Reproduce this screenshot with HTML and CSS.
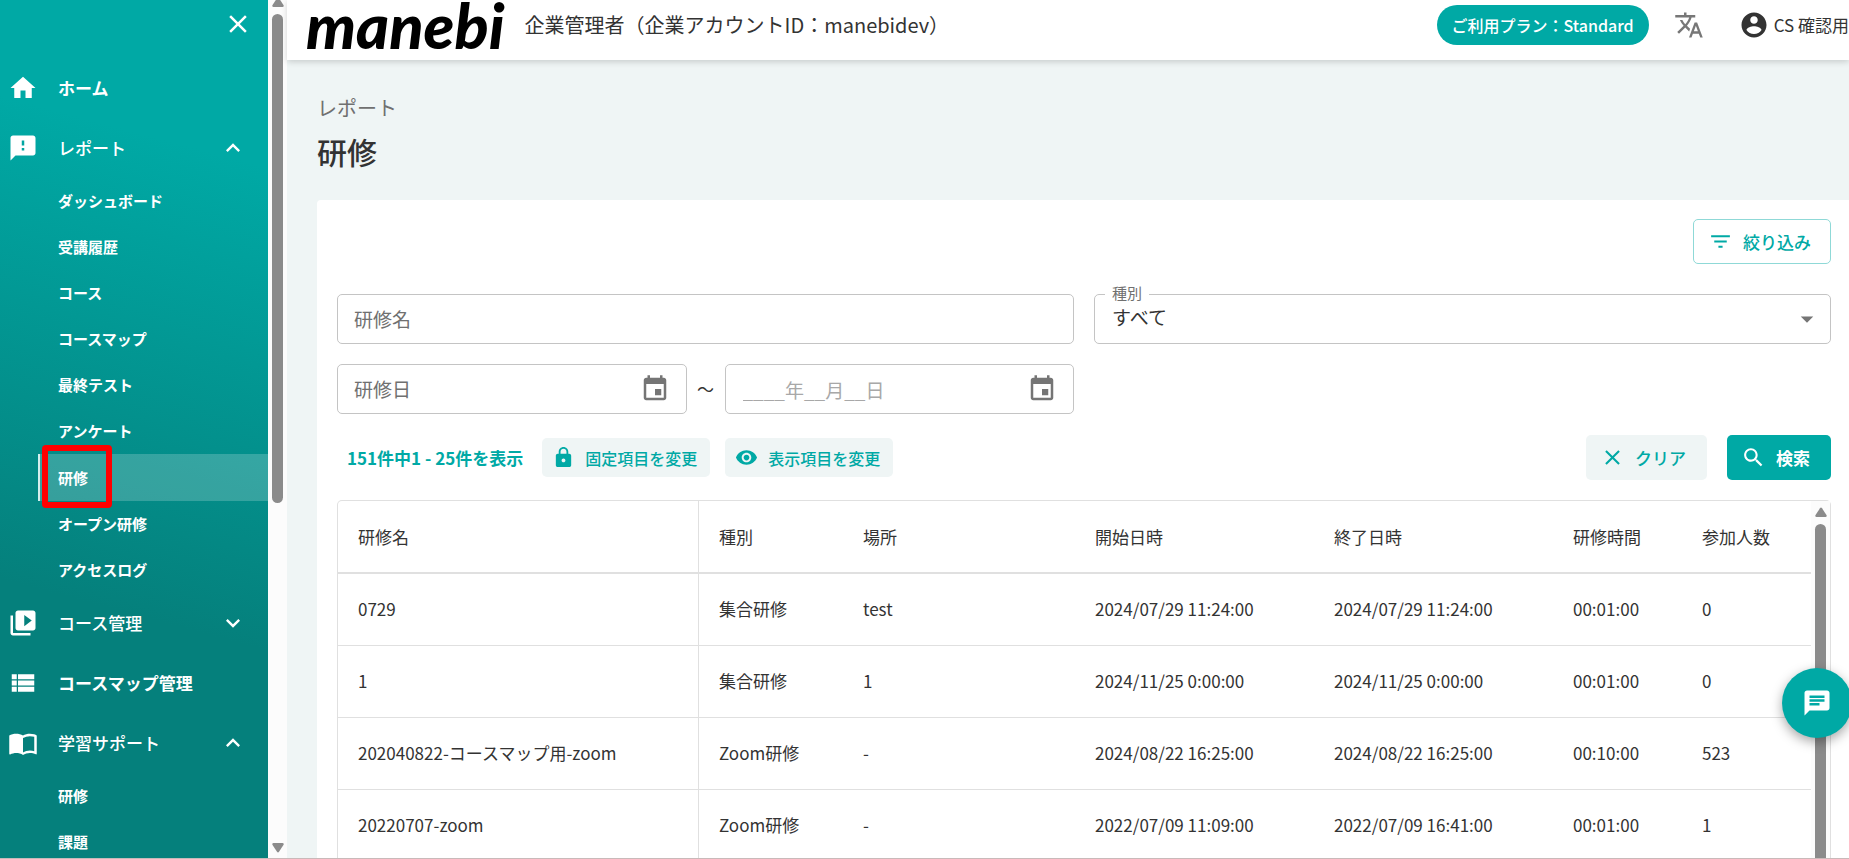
FILE: index.html
```html
<!DOCTYPE html>
<html lang="ja">
<head>
<meta charset="utf-8">
<title>研修 | manebi</title>
<link rel="stylesheet" href="styles.css">
</head>
<body>
<div class="shell">
  <aside class="sidebar">
    <div class="sidebar-top">
      <button class="icon-button" type="button" aria-label="閉じる">
        <svg class="icon" viewBox="0 0 24 24"><path d="M19 6.41 17.59 5 12 10.59 6.41 5 5 6.41 10.59 12 5 17.59 6.41 19 12 13.41 17.59 19 19 17.59 13.41 12z"/></svg>
      </button>
    </div>
    <nav class="nav">
      <a class="nav-item strong" href="#">
        <svg class="icon" viewBox="0 0 24 24"><path d="M10 20v-6h4v6h5v-8h3L12 3 2 12h3v8z"/></svg>
        <span>ホーム</span>
      </a>
      <button class="nav-item" type="button">
        <svg class="icon" viewBox="0 0 24 24"><path d="M20 2H4c-1.1 0-1.99.9-1.99 2L2 22l4-4h14c1.1 0 2-.9 2-2V4c0-1.1-.9-2-2-2zm-7 12h-2v-2h2v2zm0-4h-2V6h2v4z"/></svg>
        <span>レポート</span>
        <svg class="chevron" viewBox="0 0 24 24"><path d="M7.41 15.41 12 10.83l4.59 4.58L18 14l-6-6-6 6z"/></svg>
      </button>
      <a class="sub-item" href="#">ダッシュボード</a>
      <a class="sub-item" href="#">受講履歴</a>
      <a class="sub-item" href="#">コース</a>
      <a class="sub-item" href="#">コースマップ</a>
      <a class="sub-item" href="#">最終テスト</a>
      <a class="sub-item" href="#">アンケート</a>
      <a class="sub-item active" href="#">研修<span class="highlight"></span></a>
      <a class="sub-item" href="#">オープン研修</a>
      <a class="sub-item" href="#">アクセスログ</a>
      <button class="nav-item" type="button">
        <svg class="icon" viewBox="0 0 24 24"><path d="M4 6H2v14c0 1.1.9 2 2 2h14v-2H4V6zm16-4H8c-1.1 0-2 .9-2 2v12c0 1.1.9 2 2 2h12c1.1 0 2-.9 2-2V4c0-1.1-.9-2-2-2zm-7 12.5v-9l6 4.5-6 4.5z"/></svg>
        <span>コース管理</span>
        <svg class="chevron" viewBox="0 0 24 24"><path d="M7.41 8.59 12 13.17l4.59-4.58L18 10l-6 6-6-6z"/></svg>
      </button>
      <a class="nav-item strong" href="#">
        <svg class="icon" viewBox="0 0 24 24"><path d="M3 14h4v-4H3v4zm0 5h4v-4H3v4zM3 9h4V5H3v4zm5 5h13v-4H8v4zm0 5h13v-4H8v4zM8 5v4h13V5H8z"/></svg>
        <span>コースマップ管理</span>
      </a>
      <button class="nav-item" type="button">
        <svg class="icon" viewBox="0 0 24 24"><path d="M21 5c-1.11-.35-2.33-.5-3.5-.5-1.95 0-4.05.4-5.5 1.5-1.45-1.1-3.55-1.5-5.5-1.5S2.45 4.9 1 6v14.65c0 .25.25.5.5.5.1 0 .15-.05.25-.05C3.1 20.45 5.05 20 6.5 20c1.95 0 4.05.4 5.5 1.5 1.35-.85 3.8-1.5 5.5-1.5 1.65 0 3.35.3 4.75 1.05.1.05.15.05.25.05.25 0 .5-.25.5-.5V6c-.6-.45-1.25-.75-2-1zm0 13.5c-1.1-.35-2.3-.5-3.5-.5-1.7 0-4.15.65-5.5 1.5V8c1.35-.85 3.8-1.5 5.5-1.5 1.2 0 2.4.15 3.5.5v11.5z"/></svg>
        <span>学習サポート</span>
        <svg class="chevron" viewBox="0 0 24 24"><path d="M7.41 15.41 12 10.83l4.59 4.58L18 14l-6-6-6 6z"/></svg>
      </button>
      <a class="sub-item" href="#">研修</a>
      <a class="sub-item" href="#">課題</a>
    </nav>
  </aside>

  <div class="scrollbar side-scroll">
    <svg class="scroll-arrow" viewBox="0 0 12 10"><path d="M5 1.2Q6-.2 7 1.2L11.6 8.2Q12 10 10.5 10H1.5Q0 10 .4 8.2z"/></svg>
    <div class="side-track"><div class="thumb"></div></div>
    <svg class="scroll-arrow" viewBox="0 0 12 10"><path d="M5 8.8Q6 10.2 7 8.8L11.6 1.8Q12 0 10.5 0H1.5Q0 0 .4 1.8z"/></svg>
  </div>

  <div class="content">
    <header class="header">
      <a class="logo" href="#">manebi</a>
      <p class="account">企業管理者（企業アカウントID：manebidev）</p>
      <button class="plan" type="button">ご利用プラン：Standard</button>
      <button class="icon-button" type="button" aria-label="言語">
        <svg class="icon language" viewBox="0 0 24 24"><path d="M12.87 15.07l-2.54-2.51.03-.03c1.74-1.94 2.98-4.17 3.71-6.53H17V4h-7V2H8v2H1v1.99h11.17C11.5 7.92 10.44 9.75 9 11.35 8.07 10.32 7.3 9.19 6.69 8h-2c.73 1.63 1.73 3.17 2.98 4.56l-5.09 5.02L4 19l5-5 3.11 3.11.76-2.04zM18.5 10h-2L12 22h2l1.12-3h4.75L21 22h2l-4.5-12zm-2.62 7l1.62-4.33L19.12 17h-3.24z"/></svg>
      </button>
      <button class="user" type="button">
        <svg class="icon" viewBox="0 0 24 24"><path d="M12 2C6.48 2 2 6.48 2 12s4.48 10 10 10 10-4.48 10-10S17.52 2 12 2zm0 3c1.66 0 3 1.34 3 3s-1.34 3-3 3-3-1.34-3-3 1.34-3 3-3zm0 14.2c-2.5 0-4.71-1.28-6-3.22.03-1.99 4-3.08 6-3.08 1.99 0 5.97 1.09 6 3.08-1.29 1.94-3.5 3.22-6 3.22z"/></svg>
        <span>CS 確認用</span>
      </button>
    </header>

    <main class="main">
      <p class="crumb">レポート</p>
      <h1 class="title">研修</h1>

      <section class="card">
        <div class="card-top">
          <button class="button outline" type="button">
            <svg class="icon-m" viewBox="0 0 24 24"><path d="M10 18h4v-2h-4v2zM3 6v2h18V6H3zm3 7h12v-2H6v2z"/></svg>
            絞り込み
          </button>
        </div>

        <form class="filters">
          <div class="field">
            <input class="control" id="name" type="text">
            <label class="field-label" for="name">研修名</label>
          </div>
          <div class="field">
            <select class="control select" id="kind"><option>すべて</option></select>
            <label class="notch-label" for="kind">種別</label>
            <svg class="icon field-icon caret" viewBox="0 0 24 24"><path d="M7 10l5 5 5-5z"/></svg>
          </div>
          <div class="dates">
            <div class="field">
              <input class="control" id="from" type="text">
              <label class="field-label" for="from">研修日</label>
              <svg class="icon field-icon" viewBox="0 0 24 24"><path d="M17 12h-5v5h5v-5zM16 1v2H8V1H6v2H5c-1.11 0-1.99.9-1.99 2L3 19c0 1.1.89 2 2 2h14c1.1 0 2-.9 2-2V5c0-1.1-.9-2-2-2h-1V1h-2zm3 18H5V8h14v11z"/></svg>
            </div>
            <span class="tilde">～</span>
            <div class="field">
              <input class="control" id="to" type="text" aria-label="研修日" placeholder="____年__月__日">
              <svg class="icon field-icon" viewBox="0 0 24 24"><path d="M17 12h-5v5h5v-5zM16 1v2H8V1H6v2H5c-1.11 0-1.99.9-1.99 2L3 19c0 1.1.89 2 2 2h14c1.1 0 2-.9 2-2V5c0-1.1-.9-2-2-2h-1V1h-2zm3 18H5V8h14v11z"/></svg>
            </div>
          </div>
        </form>

        <div class="toolbar">
          <p class="count">151件中1 - 25件を表示</p>
          <button class="button small" type="button">
            <svg class="icon-s" viewBox="0 0 24 24"><path d="M18 8h-1V6c0-2.76-2.24-5-5-5S7 3.24 7 6v2H6c-1.1 0-2 .9-2 2v10c0 1.1.9 2 2 2h12c1.1 0 2-.9 2-2V10c0-1.1-.9-2-2-2zm-6 9c-1.1 0-2-.9-2-2s.9-2 2-2 2 .9 2 2-.9 2-2 2zm3.1-9H8.9V6c0-1.71 1.39-3.1 3.1-3.1 1.71 0 3.1 1.39 3.1 3.1v2z"/></svg>
            固定項目を変更
          </button>
          <button class="button small" type="button">
            <svg class="icon-s" viewBox="0 0 24 24"><path d="M12 4.5C7 4.5 2.73 7.61 1 12c1.73 4.39 6 7.5 11 7.5s9.27-3.11 11-7.5c-1.73-4.39-6-7.5-11-7.5zM12 17c-2.76 0-5-2.24-5-5s2.24-5 5-5 5 2.24 5 5-2.24 5-5 5zm0-8c-1.66 0-3 1.34-3 3s1.34 3 3 3 3-1.34 3-3-1.34-3-3-3z"/></svg>
            表示項目を変更
          </button>
          <div class="actions">
            <button class="button soft" type="button">
              <svg class="icon-m" viewBox="0 0 24 24"><path d="M19 6.41 17.59 5 12 10.59 6.41 5 5 6.41 10.59 12 5 17.59 6.41 19 12 13.41 17.59 19 19 17.59 13.41 12z"/></svg>
              クリア
            </button>
            <button class="button solid" type="button">
              <svg class="icon-m" viewBox="0 0 24 24"><path d="M15.5 14h-.79l-.28-.27C15.41 12.59 16 11.11 16 9.5 16 5.91 13.09 3 9.5 3S3 5.91 3 9.5 5.91 16 9.5 16c1.61 0 3.09-.59 4.23-1.57l.27.28v.79l5 4.99L20.49 19l-4.99-5zm-6 0C7.01 14 5 11.99 5 9.5S7.01 5 9.5 5 14 7.01 14 9.5 11.99 14 9.5 14z"/></svg>
              検索
            </button>
          </div>
        </div>

        <div class="table-box">
          <table class="table">
            <colgroup>
              <col class="c-name"><col class="c-kind"><col class="c-place"><col class="c-date"><col class="c-date"><col class="c-num"><col class="c-num">
            </colgroup>
            <thead>
              <tr><th>研修名</th><th>種別</th><th>場所</th><th>開始日時</th><th>終了日時</th><th>研修時間</th><th>参加人数</th></tr>
            </thead>
            <tbody>
              <tr><td>0729</td><td>集合研修</td><td>test</td><td>2024/07/29 11:24:00</td><td>2024/07/29 11:24:00</td><td>00:01:00</td><td>0</td></tr>
              <tr><td>1</td><td>集合研修</td><td>1</td><td>2024/11/25 0:00:00</td><td>2024/11/25 0:00:00</td><td>00:01:00</td><td>0</td></tr>
              <tr><td>202040822-コースマップ用-zoom</td><td>Zoom研修</td><td>-</td><td>2024/08/22 16:25:00</td><td>2024/08/22 16:25:00</td><td>00:10:00</td><td>523</td></tr>
              <tr><td>20220707-zoom</td><td>Zoom研修</td><td>-</td><td>2022/07/09 11:09:00</td><td>2022/07/09 16:41:00</td><td>00:01:00</td><td>1</td></tr>
            </tbody>
          </table>
          <div class="scrollbar table-scroll">
            <svg class="scroll-arrow" viewBox="0 0 12 10"><path d="M5 1.2Q6-.2 7 1.2L11.6 8.2Q12 10 10.5 10H1.5Q0 10 .4 8.2z"/></svg>
            <div class="thumb"></div>
          </div>
        </div>
      </section>
    </main>
  </div>
  <button class="chat" type="button" aria-label="チャット">
    <svg class="icon" viewBox="0 0 24 24"><path d="M20 2H4c-1.1 0-1.99.9-1.99 2L2 22l4-4h14c1.1 0 2-.9 2-2V4c0-1.1-.9-2-2-2zM6 9h12v2H6V9zm8 5H6v-2h8v2zm4-6H6V6h12v2z"/></svg>
  </button>
</div>
</body>
</html>
```

FILE: styles.css
```css
* {
  box-sizing: border-box;
}

body {
  margin: 0;
  color: #333;
  background: #eff5f5;
  font: 17px/24px "Noto Sans CJK JP", sans-serif;
}

p,
h1 {
  margin: 0;
}

a {
  color: inherit;
  text-decoration: none;
}

button {
  margin: 0;
  padding: 0;
  border: 0;
  background: none;
  color: inherit;
  font: inherit;
  cursor: pointer;
}

svg {
  display: block;
  flex: none;
  fill: currentColor;
}

.icon {
  width: 30px;
  height: 30px;
}

.icon-m {
  width: 25px;
  height: 25px;
}

.icon-s {
  width: 23px;
  height: 23px;
}

.shell {
  display: flex;
  height: 100vh;
  overflow: hidden;
  border-bottom: 1px solid #c9b9b9;
}

/* Sidebar */
.sidebar {
  flex: none;
  width: 268px;
  overflow: hidden;
  color: #fff;
  background: linear-gradient(195deg, #00a9a5 18%, #05807c 70%);
}

.sidebar-top {
  display: flex;
  justify-content: flex-end;
  height: 58px;
  padding: 9px 15px;
}

.icon-button {
  height: 30px;
}

.nav {
  display: flex;
  flex-direction: column;
}

.nav-item {
  display: flex;
  flex: none;
  align-items: center;
  gap: 20px;
  height: 60px;
  padding: 0 21px 0 8px;
  font-weight: 500;
  text-align: left;
}

.strong {
  font-weight: 700;
}

.chevron {
  width: 28px;
  height: 28px;
  margin-left: auto;
}

.sub-item {
  position: relative;
  flex: none;
  height: 46px;
  margin-left: 38px;
  padding-left: 20px;
  font-size: 15px;
  font-weight: 700;
  line-height: 46px;
}

.active {
  height: 47px;
  padding-left: 18px;
  border-left: 2px solid #d5eeed;
  background: rgba(255, 255, 255, 0.2);
  line-height: 47px;
}

.highlight {
  position: absolute;
  top: -9px;
  left: 2px;
  width: 70px;
  height: 63px;
  border: 6px solid #f00;
  border-radius: 4px;
}

/* Scrollbars */
.scrollbar {
  display: flex;
  flex: none;
  flex-direction: column;
  align-items: center;
  gap: 7px;
  width: 19px;
  background: #fcfcfc;
  color: #8b8b8b;
}

.scroll-arrow {
  width: 12px;
  height: 10px;
}

.thumb {
  width: 11px;
  border-radius: 6px;
  background: #8b8b8b;
}

.side-scroll {
  margin-top: -3px;
  padding-bottom: 5px;
}

.side-track {
  flex: 1;
}

.side-track .thumb {
  height: calc(60% - 4px);
}

/* Header */
.content {
  flex: 1;
  min-width: 0;
}

.header {
  position: relative;
  display: flex;
  align-items: center;
  height: 60px;
  padding: 0 0 10px 19px;
  background: #fff;
  box-shadow: 0 2px 6px rgba(0, 0, 0, 0.16);
  white-space: nowrap;
}

.logo {
  color: #000;
  font: italic 900 63px/50px Lato, sans-serif;
}

.account {
  margin-left: 20px;
  font-size: 20px;
}

.plan {
  height: 40px;
  margin: 0 25px 0 auto;
  padding: 0 15px;
  border-radius: 20px;
  background: #00a9a5;
  color: #fff;
  font-size: 16px;
  font-weight: 500;
}

.language {
  color: #777;
}

.user {
  display: flex;
  align-items: center;
  gap: 5px;
  margin-left: 35px;
}

/* Page */
.main {
  padding: 36px 0 0 30px;
}

.crumb {
  color: #707070;
  font-size: 20px;
}

.title {
  margin: 9px 0 27px;
  font-size: 30px;
  font-weight: 500;
  line-height: 44px;
}

.card {
  padding: 19px 18px 0 20px;
  border-radius: 4px 0 0 0;
  background: #fff;
}

.card-top {
  display: flex;
  justify-content: flex-end;
}

.button {
  display: flex;
  align-items: center;
  gap: 10px;
  height: 45px;
  padding: 0 21px 0 14px;
  border-radius: 5px;
  color: #00a9a5;
  font-weight: 500;
}

.outline {
  padding-right: 19px;
  border: 1px solid #8fd9d7;
}

.small {
  height: 39px;
  padding: 0 13px 0 10px;
  background: #eff5f5;
  font-size: 16px;
}

.soft {
  background: #eff5f5;
}

.solid {
  background: #00a9a5;
  color: #fff;
  font-weight: 700;
}

/* Filters */
.filters {
  display: grid;
  grid-template-columns: 1fr 1fr;
  gap: 20px;
  margin-top: 30px;
}

.field {
  position: relative;
  display: grid;
  flex: 1;
  align-items: center;
}

.field > * {
  grid-area: 1 / 1;
}

.control {
  width: 100%;
  min-width: 0;
  height: 50px;
  padding: 0 60px 0 17px;
  border: 1px solid #c4c4c4;
  border-radius: 5px;
  background: #fff;
  color: #333;
  font: inherit;
  font-size: 19px;
}

.control::placeholder {
  color: #a8a8a8;
  opacity: 1;
}

.select {
  padding-bottom: 4px;
  appearance: none;
}

.field-label {
  padding-left: 17px;
  color: #707070;
  font-size: 19px;
  pointer-events: none;
}

.notch-label {
  position: absolute;
  top: -13px;
  left: 11px;
  padding: 0 7px;
  background: #fff;
  color: #707070;
  font-size: 15px;
}

.field-icon {
  justify-self: end;
  margin-right: 17px;
  color: #757575;
  pointer-events: none;
}

.caret {
  margin-right: 9px;
}

.dates {
  display: flex;
  align-items: center;
}

.tilde {
  width: 38px;
  text-align: center;
}

/* Toolbar */
.toolbar {
  display: flex;
  align-items: center;
  gap: 15px;
  margin: 21px 0 20px;
  padding-left: 10px;
}

.count {
  padding-right: 4px;
  color: #00a9a5;
  font-weight: 700;
}

.actions {
  display: flex;
  gap: 20px;
  margin-left: auto;
}

/* Table */
.table-box {
  display: flex;
  border: 1px solid #e0e0e0;
  border-bottom: 0;
  border-radius: 5px 5px 0 0;
}

.table {
  flex: 1;
  table-layout: fixed;
  border-spacing: 0;
  white-space: nowrap;
}

.c-name {
  width: 361px;
}

.c-kind {
  width: 144px;
}

.c-place {
  width: 232px;
}

.c-date {
  width: 239px;
}

.c-num {
  width: 129px;
}

.table th,
.table td {
  height: 72px;
  padding: 0 0 2px 20px;
  border-bottom: 1px solid #e0e0e0;
  font-weight: 400;
  text-align: left;
}

.table th {
  height: 73px;
  padding-bottom: 0;
  border-bottom-width: 2px;
}

.table th:first-child,
.table td:first-child {
  border-right: 1px solid #e0e0e0;
}

.table-scroll {
  padding-top: 6px;
}

.table-scroll .thumb {
  flex: 1;
  border-radius: 6px 6px 0 0;
}

.chat {
  position: fixed;
  right: -3px;
  bottom: 121px;
  display: grid;
  place-items: center;
  width: 70px;
  height: 70px;
  border-radius: 50%;
  background: #00a9a5;
  color: #fff;
  box-shadow: 0 4px 12px rgba(0, 0, 0, 0.35);
}
```
